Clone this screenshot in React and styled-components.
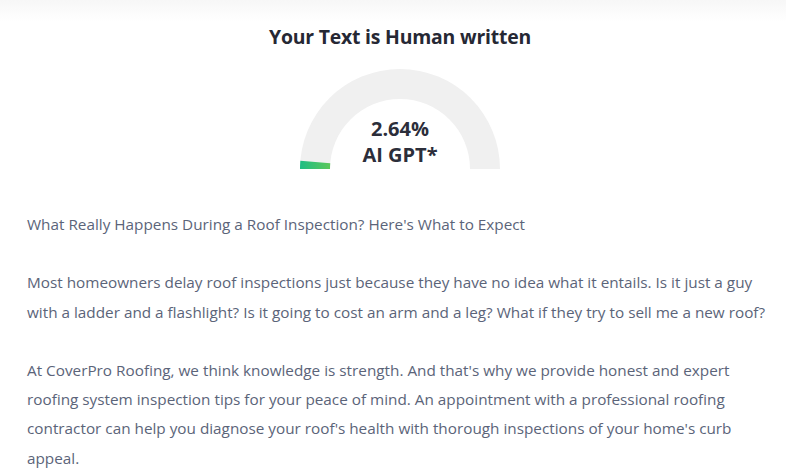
import React from "react";
import styled, { createGlobalStyle } from "styled-components";

const Global = createGlobalStyle`
  html, body { margin: 0; padding: 0; background: #fff; }
  body { font-family: "Open Sans", "Noto Sans", sans-serif; }
`;

const Page = styled.div`
  width: 786px;
  height: 474px;
  overflow: hidden;
  background: #fff;
  position: relative;
`;

const TopShade = styled.div`
  height: 22px;
  background: linear-gradient(to bottom, #f7f7f7 0%, #fbfbfb 50%, #ffffff 100%);
`;

const Header = styled.section`
  display: flex;
  flex-direction: column;
  align-items: center;
  padding-left: 14px;
`;

const Title = styled.h1`
  margin: 2px 0 0;
  font-size: 19.4px;
  line-height: 26px;
  font-weight: 700;
  color: #262834;
  letter-spacing: -0.2px;
`;

const Gauge = styled.div`
  position: relative;
  width: 200px;
  height: 100px;
  margin-top: 19px;
`;

const GaugeLabel = styled.div`
  position: absolute;
  left: 0;
  right: 0;
  bottom: 1px;
  display: flex;
  flex-direction: column;
  align-items: center;
  font-size: 20px;
  line-height: 26px;
  font-weight: 700;
  color: #2c2e3a;
`;

const Body = styled.article`
  padding: 41px 12px 0 27px;
  color: #5b6479;
  font-size: 15.3px;
  line-height: 29.3px;
`;

const Para = styled.p`
  margin: 0 0 29px;
`;

function arcPath(cx, cy, r1, r2, a0, a1) {
  const rad = (a) => (a * Math.PI) / 180;
  const p = (r, a) => [cx + r * Math.cos(rad(a)), cy - r * Math.sin(rad(a))];
  const [x0, y0] = p(r2, a0);
  const [x1, y1] = p(r2, a1);
  const [x2, y2] = p(r1, a1);
  const [x3, y3] = p(r1, a0);
  const large = Math.abs(a1 - a0) > 180 ? 1 : 0;
  return `M${x0} ${y0} A${r2} ${r2} 0 ${large} 1 ${x1} ${y1} L${x2} ${y2} A${r1} ${r1} 0 ${large} 0 ${x3} ${y3} Z`;
}

export default function App() {
  const pct = 2.64;
  const endAngle = 180 - (pct / 100) * 180;
  return (
    <Page>
      <Global />
      <TopShade />
      <Header>
        <Title>Your Text is Human written</Title>
        <Gauge>
          <svg width="200" height="100" viewBox="0 0 200 100">
            <defs>
              <linearGradient id="g" x1="0" y1="0" x2="1" y2="0">
                <stop offset="0" stopColor="#1ebd84" />
                <stop offset="1" stopColor="#5cc75a" />
              </linearGradient>
            </defs>
            <path d={arcPath(100, 100, 70, 100, 180, 0)} fill="#f0f0f0" />
            <path d={arcPath(100, 100, 70, 100, 180, endAngle)} fill="url(#g)" />
          </svg>
          <GaugeLabel>
            <span>2.64%</span>
            <span>AI GPT*</span>
          </GaugeLabel>
        </Gauge>
      </Header>
      <Body>
        <Para>What Really Happens During a Roof Inspection? Here's What to Expect</Para>
        <Para>
          Most homeowners delay roof inspections just because they have no idea what it entails. Is it just a guy
          with a ladder and a flashlight? Is it going to cost an arm and a leg? What if they try to sell me a new roof?
        </Para>
        <Para>
          At CoverPro Roofing, we think knowledge is strength. And that's why we provide honest and expert
          roofing system inspection tips for your peace of mind. An appointment with a professional roofing
          contractor can help you diagnose your roof's health with thorough inspections of your home's curb
          appeal.
        </Para>
      </Body>
    </Page>
  );
}
